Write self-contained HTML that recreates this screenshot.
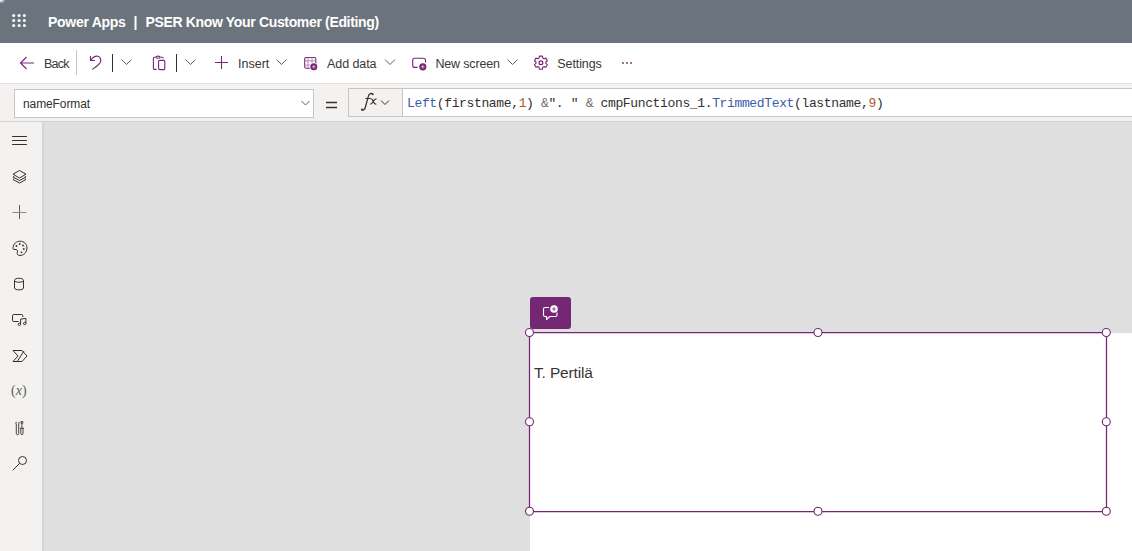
<!DOCTYPE html>
<html><head><meta charset="utf-8">
<style>
*{margin:0;padding:0;box-sizing:border-box}
html,body{width:1132px;height:551px;overflow:hidden;background:#dfdfdf;font-family:"Liberation Sans",sans-serif}
.abs{position:absolute}
#hdr{left:0;top:0;width:1132px;height:43px;background:#6b737c}
#tb{left:0;top:43px;width:1132px;height:41px;background:#fff;border-bottom:1px solid #e1dfdd}
#fb{left:0;top:84px;width:1132px;height:38px;background:#f3f2f1;border-bottom:1px solid #d2d0ce}
#side{left:0;top:122px;width:42px;height:429px;background:#f3f2f1}
.t{position:absolute;white-space:nowrap;font-size:13px;color:#323130;line-height:15px}
svg{position:absolute;overflow:visible}
#namebox{left:14px;top:5px;width:300px;height:29px;background:#fff;border:1px solid #c8c6c4}
#fxbox{left:348px;top:4px;width:55px;height:29px;background:#f3f2f1;border:1px solid #c8c6c4}
#fbox{left:402px;top:4px;width:740px;height:29px;background:#fff;border:1px solid #c8c6c4}
.tb{top:14px;font-size:12.5px;color:#383736}
.code{font-family:"Liberation Mono",monospace;font-size:13px;letter-spacing:-0.5px;color:#323130}
.fn{color:#3c5ca8}.num{color:#b5551d}.op{color:#6a6a6a}
#screen{left:530px;top:333px;width:700px;height:300px;background:#fff}
</style></head><body>
<div id="hdr" class="abs">
  <div class="abs" style="left:-3px;top:-3px;width:7px;height:5px;background:#fff;border-radius:50%;filter:blur(0.8px)"></div>
  <svg style="left:0;top:0" width="60" height="43">
    <g fill="#fff">
      <circle cx="13.7" cy="15.4" r="1.5"/><circle cx="19.1" cy="15.4" r="1.5"/><circle cx="24.4" cy="15.4" r="1.5"/>
      <circle cx="13.7" cy="20.5" r="1.5"/><circle cx="19.1" cy="20.5" r="1.5"/><circle cx="24.4" cy="20.5" r="1.5"/>
      <circle cx="13.7" cy="25.6" r="1.5"/><circle cx="19.1" cy="25.6" r="1.5"/><circle cx="24.4" cy="25.6" r="1.5"/>
    </g>
  </svg>
  <div class="t" style="left:48px;top:15px;font-size:14px;font-weight:bold;color:#fff;letter-spacing:-0.28px">Power Apps</div>
  <div class="t" style="left:133.6px;top:15px;font-size:14px;font-weight:bold;color:#fff">|</div>
  <div class="t" style="left:145.5px;top:15px;font-size:14px;font-weight:bold;color:#fff;letter-spacing:-0.34px">PSER Know Your Customer (Editing)</div>
</div>

<div id="tb" class="abs">
  <svg style="left:0;top:0" width="1132" height="40" fill="none" stroke="#742774" stroke-width="1.1">
    <!-- back arrow -->
    <path d="M20.5 20 H34 M26.5 14 L20.5 20 L26.5 26"/>
    <!-- undo -->
    <path d="M90.5 13 V17.5 H95 M90.8 17.2 C93 14 96 12.8 98 13.3 C100.5 14 101.5 17 100.2 19.5 C99 21.8 95 24.5 92.3 26.5"/>
    <!-- paste -->
    <path d="M156.6 26.4 H154.4 Q153.4 26.4 153.4 25.4 V15.3 Q153.4 14.3 154.4 14.3 H155.6 M160.4 14.3 H162 Q163.1 14.4 163.4 15.3 M159.6 17.4 H163.8 Q164.8 17.4 164.8 18.4 V25.6 Q164.8 26.6 163.8 26.6 H159.6 Q158.6 26.6 158.6 25.6 V18.4 Q158.6 17.4 159.6 17.4 Z"/>
    <ellipse cx="158" cy="14.2" rx="2.1" ry="1.1"/>
    <!-- plus -->
    <path d="M221.5 13 V26 M215 19.5 H228"/>
    <!-- add data grid -->
    <path d="M306.2 14.5 H314.3 Q315.8 14.5 315.8 16 V24 Q315.8 25.2 314.3 25.2 H306.2 Q304.7 25.2 304.7 23.7 V16 Q304.7 14.5 306.2 14.5 Z"/>
    <path d="M308 14.5 V25.2 M312 14.5 V25.2 M304.7 17.8 H315.8 M304.7 22.1 H315.8" stroke="#b088b0" stroke-width="1"/>
    <!-- new screen -->
    <path d="M417.6 24.4 H414.7 Q412.7 24.4 412.7 22.4 V17.3 Q412.7 15.3 414.7 15.3 H423.5 Q425.5 15.3 425.5 17.3 V19.6"/>
    <!-- gear -->
    <circle cx="540.9" cy="19.7" r="1.9" stroke-width="1.2"/>
    <path d="M539.03 15.06 L539.39 13.17 L542.41 13.17 L542.77 15.06 L543.98 15.76 L545.80 15.13 L547.31 17.74 L545.85 19.00 L545.85 20.40 L547.31 21.66 L545.80 24.27 L543.98 23.64 L542.77 24.34 L542.41 26.23 L539.39 26.23 L539.03 24.34 L537.82 23.64 L536.00 24.27 L534.49 21.66 L535.95 20.40 L535.95 19.00 L534.49 17.74 L536.00 15.13 L537.82 15.76 Z" stroke-linejoin="round"/>
  </svg>
  <svg style="left:0;top:0" width="1132" height="40">
    <circle cx="313.8" cy="23.8" r="4.1" fill="#fff"/>
    <circle cx="313.8" cy="23.8" r="3.5" fill="#742774"/>
    <path d="M313.8 22 V25.6 M312 23.8 H315.6" stroke="#d8c0d8" stroke-width="0.9"/>
    <circle cx="422.8" cy="23.8" r="4.1" fill="#fff"/>
    <circle cx="422.8" cy="23.8" r="3.6" fill="#742774"/>
    <path d="M422.8 22 V25.6 M421 23.8 H424.6" stroke="#d8c0d8" stroke-width="0.9"/>
    <!-- separators -->
    <path d="M76.5 7 V32" stroke="#c8c6c4" stroke-width="1"/>
    <path d="M112.5 11 V29 M176.5 11 V29" stroke="#323130" stroke-width="1"/>
    <!-- chevrons -->
    <g fill="none" stroke="#605e5c" stroke-width="1">
      <path d="M121.5 16.5 L126.5 21.5 L131.5 16.5"/>
      <path d="M185.5 16.5 L190.5 21.5 L195.5 16.5"/>
      <path d="M276.5 16.5 L281.5 21.5 L286.5 16.5"/>
      <path d="M385 16.5 L390 21.5 L395 16.5"/>
      <path d="M507.5 16.5 L512.5 21.5 L517.5 16.5"/>
    </g>
    <g fill="#742774">
      <circle cx="623" cy="20" r="0.9"/><circle cx="627" cy="20" r="0.9"/><circle cx="631" cy="20" r="0.9"/>
    </g>
  </svg>
  <div class="t tb" style="left:44px;letter-spacing:-0.8px">Back</div>
  <div class="t tb" style="left:238px;letter-spacing:0px">Insert</div>
  <div class="t tb" style="left:327px;letter-spacing:-0.07px">Add data</div>
  <div class="t tb" style="left:435.5px;letter-spacing:-0.18px">New screen</div>
  <div class="t tb" style="left:557.3px;letter-spacing:-0.1px">Settings</div>
</div>

<div id="fb" class="abs">
  <div id="namebox" class="abs"></div>
  <div class="t" style="left:23px;top:13px;font-size:12px;letter-spacing:-0.1px">nameFormat</div>
  <svg style="left:0;top:0" width="1132" height="38" fill="none" stroke="#605e5c" stroke-width="1">
    <path d="M301.5 17 L305.5 21 L309.5 17"/>
  </svg>
  <svg style="left:0;top:0" width="1132" height="38">
    <path d="M326 18.5 H337 M326 23.5 H337" stroke="#323130" stroke-width="1.4"/>
  </svg>
  <div id="fxbox" class="abs"></div>
  <div id="fbox" class="abs"></div>
  <svg style="left:0;top:0" width="1132" height="38" fill="none" stroke="#323130">
    <path d="M372.8 10.3 C371.5 8.8 369.2 9.3 368.4 12.2 L365.3 23.5 C364.6 26 362.8 26.6 361.6 25.6" stroke-width="1.25"/>
    <circle cx="372.6" cy="10.2" r="1" fill="#323130" stroke="none"/>
    <circle cx="361.9" cy="25.6" r="1" fill="#323130" stroke="none"/>
    <path d="M365.4 14.5 H370.6" stroke-width="1"/>
    <path d="M370.3 14.8 Q372.3 14.4 373.2 17.2 Q374.1 20.3 376.3 20.2 M376.6 14.8 Q374.6 14.9 373.1 17.4 Q371.6 20.3 370.1 20.3" stroke-width="1.1"/>
  </svg>
  <svg style="left:0;top:0" width="1132" height="38" fill="none" stroke="#323130" stroke-width="1">
    <path d="M381 16.5 L385 20.5 L389 16.5"/>
  </svg>
  <div class="t code" style="left:407px;top:12px;letter-spacing:-0.36px"><span class="fn">Left</span>(firstname,<span class="num">1</span>) <span class="op">&amp;</span>". " <span class="op">&amp;</span> cmpFunctions_1.<span class="fn">TrimmedText</span>(lastname,<span class="num">9</span>)</div>
</div>

<div id="side" class="abs"></div>
<svg style="left:0;top:0" width="42" height="551" fill="none" stroke="#323130" stroke-width="1">
  <!-- hamburger -->
  <path d="M12.5 136.5 H26.5 M12.5 140.5 H26.5 M12.5 144.5 H26.5" stroke-linecap="round"/>
  <!-- layers -->
  <path d="M19.5 170.5 L26 174.2 L19.5 178 L13 174.2 Z" stroke-linejoin="round"/>
  <path d="M14.2 176.2 L13 177 L19.5 180.5 L26 177 L24.8 176.2" stroke-linejoin="round"/>
  <path d="M14.2 178.7 L13 179.5 L19.5 183 L26 179.5 L24.8 178.7" stroke-linejoin="round"/>
  <!-- plus -->
  <path d="M19.5 205 V219" stroke="#605e5c"/><path d="M12.5 212.5 H26.5" stroke="#8a8886"/>
  <!-- palette -->
  <path d="M20 241.2 C24.5 241.2 27 244.5 27 248 C27 252.5 23.5 255.5 20 255.5 C17.5 255.5 16.8 254 17.3 252.3 C17.8 250.5 17 249 15 249.5 C13.5 249.8 12.8 249 13 247.5 C13.5 243.8 16.5 241.2 20 241.2 Z" stroke-linejoin="round"/>
  <g fill="#323130" stroke="none">
    <circle cx="16.5" cy="246" r="0.9"/><circle cx="19.7" cy="244" r="0.9"/><circle cx="23" cy="245.5" r="0.9"/><circle cx="23.8" cy="249" r="0.9"/><circle cx="21.5" cy="252.3" r="0.9"/>
  </g>
  <!-- cylinder -->
  <path d="M14.5 280.5 C14.5 277.5 23.5 277.5 23.5 280.5 V288 C23.5 290.5 14.5 290.5 14.5 288 Z M14.5 280.5 C14.5 282.8 23.5 282.8 23.5 280.5"/>
  <!-- media -->
  <path d="M18.5 321.5 H13.8 Q12.5 321.5 12.5 320.2 V315.8 Q12.5 314.5 13.8 314.5 H21.5 Q22.8 314.5 22.8 315.8 V317"/>
  <path d="M20.6 324 V319.2 L25.9 318.3 V323.3" />
  <circle cx="19.4" cy="324.3" r="1.2"/><circle cx="24.7" cy="323.5" r="1.2"/>
  <!-- automate chevrons -->
  <path d="M13 350.5 H22 L27 356 L22 361.5 H13 L18 356 Z M17.5 361 L24 351" stroke-linejoin="round"/>
  <!-- tools -->
  <path d="M16.3 424 V433.5 Q16.3 434.7 17.5 434.7 Q18.7 434.7 18.7 433.5 V424 Q19.3 423.3 18.8 421.8 M16.2 424 Q15.6 423.3 16.2 421.8" stroke-width="0.9"/>
  <path d="M20.8 428.5 V433.5 Q20.8 434.7 21.9 434.7 Q23 434.7 23 433.5 V428.5 M19.8 428.3 H24 M21.9 428.3 V423.5 M21 421.5 H22.8 V423.3 H21 Z" stroke-width="0.9"/>
  <!-- search -->
  <circle cx="22.5" cy="460.5" r="4"/>
  <path d="M19.6 463.4 L13 470" stroke-linecap="round"/>
</svg>
<div class="t" style="left:11px;top:383px;font-family:'Liberation Serif',serif;font-size:14px;color:#605e5c">(<i>x</i>)</div>
<div id="screen" class="abs"></div>
<div class="abs" style="left:42px;top:122px;width:3px;height:429px;background:linear-gradient(to right,rgba(0,0,0,0.06),rgba(0,0,0,0))"></div>
<div class="abs" style="left:530px;top:297px;width:41px;height:32px;background:#742774;border-radius:3px"></div>
<svg style="left:0;top:0" width="1132" height="551">
  <path d="M549 307.5 H545 Q543.5 307.5 543.5 309 V315 Q543.5 316.5 545 316.5 H546.5 V319.5 L549.8 316.5 H555.5 Q557 316.5 557 315 V312.5" fill="none" stroke="#fff" stroke-width="1.1" stroke-linejoin="round"/>
  <circle cx="554" cy="309" r="3.8" fill="#fff"/>
  <circle cx="554" cy="309" r="1.7" fill="#a774a7"/>
  <g fill="none" stroke="#742774" stroke-width="1.25">
    <path d="M529.5 332.5 H1106.5 V511.5 H529.5 Z"/>
  </g>
  <g fill="#fff" stroke="#742774" stroke-width="1.1">
    <circle cx="529.5" cy="332.5" r="4"/><circle cx="818" cy="332.5" r="4"/><circle cx="1106.3" cy="332.5" r="4"/>
    <circle cx="529.5" cy="421.7" r="4"/><circle cx="1106.3" cy="421.7" r="4"/>
    <circle cx="529.5" cy="511.3" r="4"/><circle cx="818" cy="511.3" r="4"/><circle cx="1106.3" cy="511.3" r="4"/>
  </g>
</svg>
<div class="t" style="left:534px;top:364px;font-size:15.5px;line-height:17px;letter-spacing:-0.15px;color:#383736">T. Pertilä</div>
</body></html>
